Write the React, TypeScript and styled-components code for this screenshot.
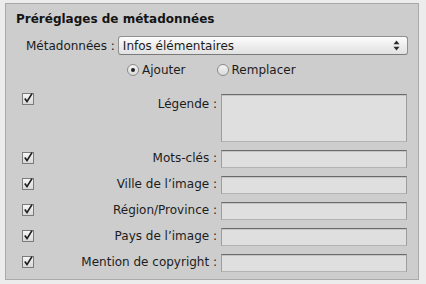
import { Fragment } from 'react';
import styled, { createGlobalStyle } from 'styled-components';

const Global = createGlobalStyle`
    html, body {
        margin: 0;
        padding: 0;
        background: #ececec;
    }
    body {
        font-family: "DejaVu Sans", "Liberation Sans", sans-serif;
        font-size: 12px;
        color: #1c1c1c;
    }
`

const Page = styled.div`
    width: 426px;
    height: 284px;
    padding: 3px 0 0 5px;
    box-sizing: border-box;
`

const Panel = styled.section`
    width: 414px;
    height: 277px;
    box-sizing: border-box;
    background: #cdcdcd;
    border: 1px solid #a9a9a9;
    padding: 7px 11px 0 0;
    display: flex;
    flex-direction: column;
`

const Title = styled.h2`
    margin: 0 0 0 10px;
    font-size: 12px;
    line-height: 16px;
    font-weight: bold;
    color: #141414;
`

const PresetRow = styled.div`
    margin-top: 9px;
    padding-left: 20px;
    display: flex;
    align-items: center;
    gap: 3px;
`

const Label = styled.span`
    white-space: nowrap;
    line-height: 16px;
`

const Select = styled.div`
    flex: 1;
    height: 19px;
    box-sizing: border-box;
    margin-right: -1px;
    border: 1px solid #8f8f8f;
    border-bottom-color: #7a7a7a;
    border-radius: 3px;
    background: linear-gradient(#fdfdfd, #ececec 55%, #e2e2e2);
    display: flex;
    align-items: center;
    justify-content: space-between;
    padding: 0 7px 0 4px;
    & span {
        line-height: 16px;
    }
`

const RadioRow = styled.div`
    margin-top: 7px;
    padding-left: 121px;
    display: flex;
    gap: 31px;
`

const RadioItem = styled.label`
    display: flex;
    align-items: center;
    gap: 3px;
    line-height: 16px;
`

const RadioDot = styled.span<{ $on?: boolean }>`
    width: 12px;
    height: 12px;
    box-sizing: border-box;
    border-radius: 50%;
    border: 1px solid #8a8a8a;
    background: linear-gradient(#f4f4f4, #dadada);
    display: flex;
    align-items: center;
    justify-content: center;
    &::after {
        content: '';
        width: 4px;
        height: 4px;
        border-radius: 50%;
        background: ${p => (p.$on ? '#222' : 'transparent')};
    }
`

const Fields = styled.div`
    margin-top: 16px;
    padding-left: 16px;
    display: grid;
    grid-template-columns: 12px 1fr 186px;
    column-gap: 4px;
    row-gap: 8px;
    align-items: center;
`

const Check = styled.span<{ $top?: boolean }>`
    position: relative;
    width: 12px;
    height: 12px;
    box-sizing: border-box;
    border: 1px solid #7b7b7b;
    background: linear-gradient(#f6f6f6, #d8d8d8);
    align-self: ${p => (p.$top ? 'start' : 'center')};
    margin-top: ${p => (p.$top ? '-1px' : '-3px')};
    & svg {
        position: absolute;
        left: 0;
        top: -2px;
        display: block;
    }
`

const FieldLabel = styled.span<{ $top?: boolean }>`
    text-align: right;
    white-space: nowrap;
    line-height: 16px;
    align-self: ${p => (p.$top ? 'start' : 'center')};
    margin-top: ${p => (p.$top ? '2px' : '-2px')};
`

const Input = styled.div<{ $tall?: boolean }>`
    height: ${p => (p.$tall ? 48 : 18)}px;
    box-sizing: border-box;
    background: #dfdfdf;
    border: 1px solid #9d9d9d;
    border-top: 1px solid #6a6a6a;
    border-bottom-color: #b3b3b3;
    box-shadow: inset 0 1px 0 #c4c4c4;
`

const CheckMark = () => (
    <svg width="11" height="12" viewBox="0 0 11 12">
        <path d="M1.8 6.6 L4 9.6 L9 1.6" fill="none" stroke="#1e1e1e" strokeWidth="1.7" />
    </svg>
)

const Arrows = () => (
    <svg width="7" height="11" viewBox="0 0 7 11">
        <path d="M3.5 0.5 L6.5 4.2 L0.5 4.2 Z" fill="#2a2a2a" />
        <path d="M3.5 10.5 L6.5 6.8 L0.5 6.8 Z" fill="#2a2a2a" />
    </svg>
)

const fields = [
    { label: 'Légende', tall: true },
    { label: 'Mots-clés' },
    { label: 'Ville de l’image' },
    { label: 'Région/Province' },
    { label: 'Pays de l’image' },
    { label: 'Mention de copyright' },
]

export default function App() {
    return (
        <>
        <Global />
        <Page>
        <Panel>
            <Title>Préréglages de métadonnées</Title>
            <PresetRow>
                <Label>Métadonnées :</Label>
                <Select>
                    <span>Infos élémentaires</span>
                    <Arrows />
                </Select>
            </PresetRow>
            <RadioRow>
                <RadioItem><RadioDot $on />Ajouter</RadioItem>
                <RadioItem><RadioDot />Remplacer</RadioItem>
            </RadioRow>
            <Fields>
                {fields.map(f => (
                    <Fragment key={f.label}>
                    <Check $top={f.tall}><CheckMark /></Check>
                    <FieldLabel $top={f.tall}>{f.label} :</FieldLabel>
                    <Input $tall={f.tall} />
                    </Fragment>
                ))}
            </Fields>
        </Panel>
        </Page>
        </>
    );
}
